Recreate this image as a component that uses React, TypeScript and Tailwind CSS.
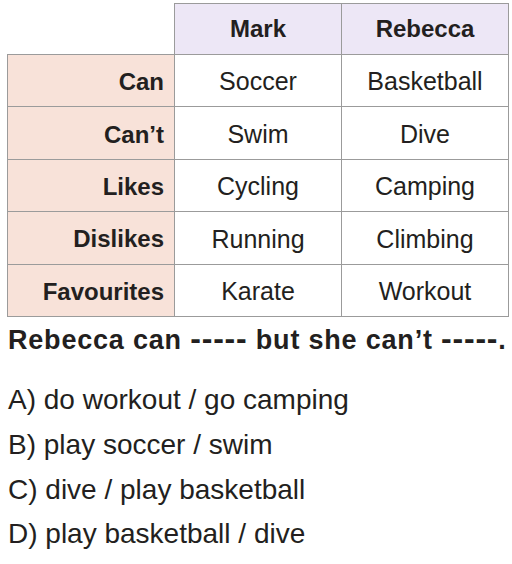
const rows = [
  { label: 'Can', mark: 'Soccer', rebecca: 'Basketball' },
  { label: 'Can’t', mark: 'Swim', rebecca: 'Dive' },
  { label: 'Likes', mark: 'Cycling', rebecca: 'Camping' },
  { label: 'Dislikes', mark: 'Running', rebecca: 'Climbing' },
  { label: 'Favourites', mark: 'Karate', rebecca: 'Workout' },
];

const options = [
  'A) do workout / go camping',
  'B) play soccer / swim',
  'C) dive / play basketball',
  'D) play basketball / dive',
];

export default function App() {
  return (
    <div className="w-[512px] h-[564px] bg-white text-[#231f20] font-['Liberation_Sans',Arial,sans-serif] overflow-hidden">
      {/* Table */}
      <table className="ml-[7px] mt-[3px] border-collapse table-fixed w-[501px]">
        <colgroup>
          <col className="w-[167px]" />
          <col className="w-[167px]" />
          <col className="w-[167px]" />
        </colgroup>
        <thead>
          <tr className="h-[51px]">
            <th></th>
            <th className="border border-[#9b9b9b] bg-[#ede7f6] text-[24px] font-bold text-center">
              Mark
            </th>
            <th className="border border-[#9b9b9b] bg-[#ede7f6] text-[24px] font-bold text-center">
              Rebecca
            </th>
          </tr>
        </thead>
        <tbody>
          {rows.map((r) => (
            <tr key={r.label} className="h-[52.4px]">
              <td className="border border-[#9b9b9b] bg-[#f8e2d9] text-[24px] font-bold text-right pr-[10px] pt-[3px]">
                {r.label}
              </td>
              <td className="border border-[#9b9b9b] text-[25px] text-center pt-[3px]">
                {r.mark}
              </td>
              <td className="border border-[#9b9b9b] text-[25px] text-center pt-[3px]">
                {r.rebecca}
              </td>
            </tr>
          ))}
        </tbody>
      </table>

      {/* Question */}
      <p className="mt-[6px] ml-[8px] text-[27px] font-bold leading-[30px] whitespace-nowrap tracking-[0.8px]">
        Rebecca can{' '}
        <span className="text-[32px] leading-[30px] tracking-[0.8px]">-----</span> but she
        can’t <span className="text-[32px] leading-[30px] tracking-[0.8px]">-----</span>.
      </p>

      {/* Options */}
      <ul className="mt-[23px] ml-[8px]">
        {options.map((o) => (
          <li key={o} className="text-[28px] leading-[44.8px] whitespace-nowrap">
            {o}
          </li>
        ))}
      </ul>
    </div>
  );
}
